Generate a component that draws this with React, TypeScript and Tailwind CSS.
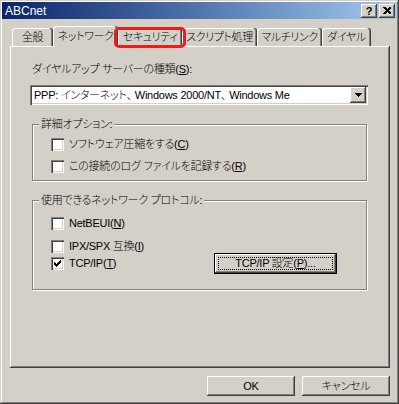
import React from "react";

const raised =
  "shadow-[inset_-1px_-1px_0_#404040,inset_1px_1px_0_#ffffff,inset_-2px_-2px_0_#808080]";
const sunken =
  "shadow-[inset_1px_1px_0_#808080,inset_2px_2px_0_#404040,inset_-1px_-1px_0_#ffffff,inset_-2px_-2px_0_#d4d0c8]";

const Key = ({ k }: { k: string }) => (
  <span className="underline underline-offset-[1px]">{k}</span>
);

const Comma = () => <span className="mr-[3px]">、</span>;

const CheckBox = ({ checked }: { checked?: boolean }) => (
  <span
    className={`w-[13px] h-[13px] bg-white shrink-0 flex items-center justify-center ${sunken}`}
  >
    {checked && (
      <svg width="7" height="7" viewBox="0 0 7 7" shapeRendering="crispEdges">
        <path d="M6 0h1v3h-1v1h-1v1h-1v1h-1v1h-1v-1h-1v-1h-1v-3h1v1h1v1h1v-1h1v-1h1v-1h1z" fill="#000" />
      </svg>
    )}
  </span>
);

const CheckRow = ({ label, checked }: { label: React.ReactNode; checked?: boolean }) => (
  <div className="flex items-center h-[13px] gap-[5px]">
    <CheckBox checked={checked} />
    <span className="leading-[13px] whitespace-nowrap">{label}</span>
  </div>
);

const GroupBox = ({
  title,
  h,
  children,
}: {
  title: string;
  h: string;
  children: React.ReactNode;
}) => (
  <div
    className={`relative w-[335px] ${h} border border-[#808080] shadow-[1px_1px_0_#ffffff,inset_1px_1px_0_#ffffff]`}
  >
    <span className="absolute left-[6px] -top-[8px] px-[2px] bg-[#d4d0c8] leading-[14px] whitespace-nowrap">
      {title}
    </span>
    {children}
  </div>
);

const Tab = ({
  label,
  w,
  active,
}: {
  label: string;
  w: string;
  active?: boolean;
}) => (
  <div
    className={`${w} flex items-center justify-center rounded-t-[3px] bg-[#d4d0c8] shadow-[inset_-1px_0_0_#404040,inset_-2px_0_0_#808080,inset_1px_1px_0_#ffffff] ${
      active ? "h-[21px] -mb-[1px] pb-[2px] relative z-10" : "h-[18px]"
    }`}
  >
    <span className="leading-[14px] whitespace-nowrap tracking-[-0.4px]">{label}</span>
  </div>
);

const Button = ({
  children,
  w,
}: {
  children: React.ReactNode;
  w: string;
}) => (
  <div className={`${w} h-[20px] flex items-center justify-center bg-[#d4d0c8] ${raised}`}>
    <span className="leading-[14px]">{children}</span>
  </div>
);

export default function App() {
  return (
    <div className="w-[399px] h-[404px] bg-[#d4d0c8] relative text-[11px] tracking-[-0.25px] font-light text-black font-['Liberation_Sans','Noto_Sans_CJK_JP',sans-serif] [font-feature-settings:'palt'] shadow-[inset_-1px_-1px_0_#404040,inset_1px_1px_0_#d4d0c8,inset_-2px_-2px_0_#808080,inset_2px_2px_0_#ffffff] overflow-hidden">
      {/* title bar */}
      <div className="mx-[2px] mt-[2px] h-[17px] flex items-center pl-[3px] pr-[2px] bg-gradient-to-r from-[#0a246a] to-[#a6caf0]">
        <span className="text-white font-normal tracking-normal text-[12px] leading-[14px]">
          ABCnet
        </span>
        <div className="ml-auto flex gap-[2px]">
          <div className={`w-[16px] h-[14px] bg-[#d4d0c8] flex items-center justify-center ${raised}`}>
            <span className="font-bold text-[11px] leading-[11px] pt-[1px]">?</span>
          </div>
          <div className={`w-[16px] h-[14px] bg-[#d4d0c8] flex items-center justify-center ${raised}`}>
            <svg width="8" height="7" viewBox="0 0 8 7" shapeRendering="crispEdges">
              <path d="M0 0h2l2 2 2-2h2v1l-2.5 2.5L8 6v1H6L4 5 2 7H0V6l2.5-2.5L0 1z" fill="#000" />
            </svg>
          </div>
        </div>
      </div>

      {/* tabs + panel */}
      <div className="mt-[7px] ml-[10px] w-[380px]">
        <div className="flex items-end h-[20px] pl-[2px] relative z-10">
          <Tab label="全般" w="w-[41px]" />
          <Tab label="ネットワーク" w="w-[65px]" active />
          <Tab label="セキュリティ" w="w-[64px]" />
          <Tab label="スクリプト処理" w="w-[75px]" />
          <Tab label="マルチリンク" w="w-[65px]" />
          <Tab label="ダイヤル" w="w-[49px]" />
        </div>
        <div className="h-[322px] pl-[20px] pt-[16px] shadow-[inset_-1px_-1px_0_#404040,inset_1px_1px_0_#ffffff,inset_-2px_-2px_0_#808080]">
          <div className="ml-[2px] leading-[14px]">
            ダイヤルアップ サーバーの種類(<Key k="S" />):
          </div>
          <div className={`mt-[9px] w-[338px] h-[20px] bg-white flex items-center pl-[4px] pr-[2px] ${sunken}`}>
            <span className="leading-[14px] whitespace-nowrap">
              PPP: インターネット<Comma />Windows 2000/NT<Comma />Windows Me
            </span>
            <div className={`ml-auto w-[16px] h-[16px] bg-[#d4d0c8] flex items-center justify-center ${raised}`}>
              <svg width="7" height="4" viewBox="0 0 7 4" shapeRendering="crispEdges">
                <path d="M0 0h7v1h-1v1h-1v1h-1v1h-1v-1h-1v-1h-1v-1h-1z" fill="#000" />
              </svg>
            </div>
          </div>

          <div className="mt-[19px] ml-[2px]">
            <GroupBox title="詳細オプション:" h="h-[57px]">
              <div className="pt-[13px] pl-[18px] flex flex-col gap-[9px]">
                <CheckRow label={<>ソフトウェア圧縮をする(<Key k="C" />)</>} />
                <CheckRow label={<>この接続のログ ファイルを記録する(<Key k="R" />)</>} />
              </div>
            </GroupBox>
          </div>

          <div className="mt-[19px] ml-[2px]">
            <GroupBox title="使用できるネットワーク プロトコル:" h="h-[90px]">
              <div className="pt-[16px] pl-[18px] flex flex-col">
                <CheckRow label={<>NetBEUI(<Key k="N" />)</>} />
                <div className="mt-[10px]">
                  <CheckRow label={<>IPX/SPX 互換(<Key k="I" />)</>} />
                </div>
                <div className="flex items-center h-[21px]">
                  <div className="w-[163px]">
                    <CheckRow checked label={<>TCP/IP(<Key k="T" />)</>} />
                  </div>
                  <div className="w-[123px] h-[21px] border border-black bg-[#d4d0c8] shadow-[inset_-1px_-1px_0_#404040,inset_1px_1px_0_#ffffff,inset_-2px_-2px_0_#808080] p-[3px]">
                    <div className="w-full h-full border border-dotted border-black flex items-center justify-center">
                      <span className="leading-[13px] whitespace-nowrap">
                        TCP/IP 設定(<Key k="P" />)...
                      </span>
                    </div>
                  </div>
                </div>
              </div>
            </GroupBox>
          </div>
        </div>
      </div>

      {/* bottom buttons */}
      <div className="mt-[8px] flex justify-end gap-[7px] pr-[9px]">
        <Button w="w-[88px]">OK</Button>
        <Button w="w-[88px]">キャンセル</Button>
      </div>

      {/* red highlight around the security tab */}
      <div className="absolute z-20 left-[114px] top-[27px] w-[72px] h-[21px] border-[3px] border-[#f01c1c] rounded-[5px]" />
    </div>
  );
}
